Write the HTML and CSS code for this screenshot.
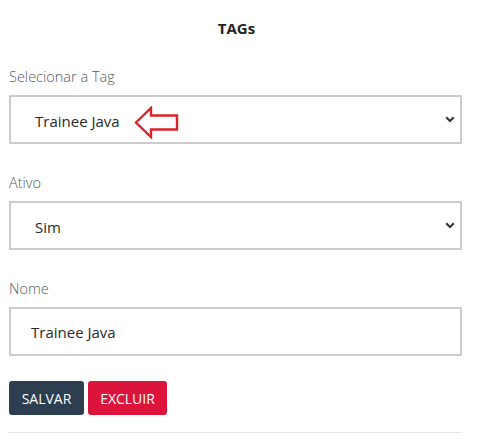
FILE: index.html
```html
<!DOCTYPE html>
<html lang="pt">
<head>
<meta charset="utf-8">
<title>TAGs</title>
<link rel="stylesheet" href="styles.css">
</head>
<body>
<main class="panel">
  <h1 class="title">TAGs</h1>
  <form class="form">
    <div class="group">
      <label class="label" for="tag">Selecionar a Tag</label>
      <div class="select-wrap">
        <select id="tag" class="control select">
          <option>Trainee Java</option>
        </select>
        <svg class="chevron" width="10" height="7" viewBox="0 0 10 7"><path d="M1.2 1.2 L5 5 L8.8 1.2" fill="none" stroke="#333" stroke-width="2"/></svg>
        <svg class="pointer" width="46" height="33" viewBox="0 0 46 33"><path d="M2 16.5 L17 2 L17 9.5 L43 9.5 L43 23.5 L17 23.5 L17 31 Z" fill="none" stroke="#d9232d" stroke-width="2.4" stroke-linejoin="miter"/></svg>
      </div>
    </div>
    <div class="group">
      <label class="label" for="ativo">Ativo</label>
      <div class="select-wrap">
        <select id="ativo" class="control select">
          <option>Sim</option>
        </select>
        <svg class="chevron" width="10" height="7" viewBox="0 0 10 7"><path d="M1.2 1.2 L5 5 L8.8 1.2" fill="none" stroke="#333" stroke-width="2"/></svg>
      </div>
    </div>
    <div class="group">
      <label class="label" for="nome">Nome</label>
      <input id="nome" class="control input" type="text" value="Trainee Java">
    </div>
    <div class="actions">
      <button type="button" class="btn btn-save">SALVAR</button>
      <button type="button" class="btn btn-delete">EXCLUIR</button>
    </div>
  </form>
  <hr class="divider">
</main>
</body>
</html>
```

FILE: styles.css
```css
* { box-sizing: border-box; }
html, body { margin: 0; padding: 0; background: #fff; }
body {
  font-family: "Open Sans", "Noto Sans", Arial, sans-serif;
  color: #333;
}
.panel {
  width: 453px;
  margin-left: 9px;
  padding-top: 17px;
}
.title {
  margin: 0;
  text-align: center;
  font-size: 15px;
  font-weight: 700;
  line-height: 22px;
  color: #222;
  padding-left: 2px;
}
.form {
  margin-top: 28px;
}
.group {
  margin-bottom: 29px;
}
.label {
  display: block;
  font-size: 14.5px;
  font-weight: 300;
  line-height: 20px;
  color: #5a5a5a;
  margin-bottom: 8px;
}
.select-wrap {
  position: relative;
}
.control {
  display: block;
  width: 100%;
  height: 49px;
  border: 2px solid #ccc;
  border-radius: 0;
  background: #fff;
  font-family: inherit;
  font-size: 15px;
  font-weight: 400;
  color: #2a2a2a;
  outline: none;
  margin: 0;
  padding-top: 2px;
}
.select {
  appearance: none;
  -webkit-appearance: none;
  padding-left: 24px;
  padding-right: 30px;
}
.input {
  padding-left: 20px;
  padding-right: 20px;
}
.chevron {
  position: absolute;
  right: 7px;
  top: 21px;
  pointer-events: none;
}
.pointer {
  position: absolute;
  left: 125px;
  top: 11px;
  pointer-events: none;
}
.actions {
  display: flex;
  gap: 4px;
  margin-top: -4px;
}
.btn {
  height: 34px;
  border: none;
  border-radius: 3px;
  color: #fff;
  font-family: inherit;
  font-size: 14px;
  padding: 0;
}
.btn-save { background: #2c3e50; width: 75px; }
.btn-delete { background: #dc143c; width: 79px; }
.divider {
  margin: 17px 0 0;
  border: 0;
  border-top: 1px solid #e6e6e6;
}
```
